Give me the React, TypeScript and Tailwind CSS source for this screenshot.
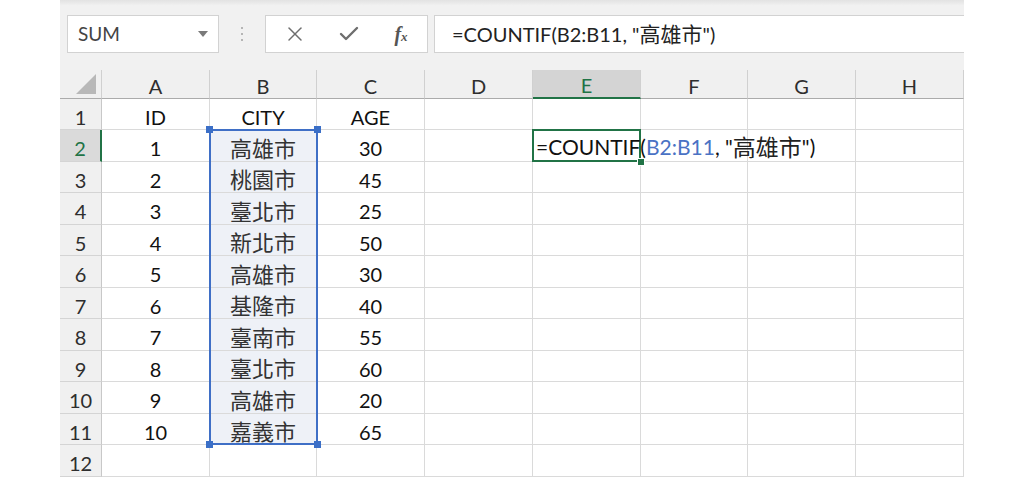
import React from "react";
import { X, Check } from "lucide-react";

const FONT = { fontFamily: '"Lato", "Noto Sans CJK TC", sans-serif' };

const cols = ["A", "B", "C", "D", "E", "F", "G", "H"];
const data: [string, string, string][] = [
  ["ID", "CITY", "AGE"],
  ["1", "高雄市", "30"],
  ["2", "桃園市", "45"],
  ["3", "臺北市", "25"],
  ["4", "新北市", "50"],
  ["5", "高雄市", "30"],
  ["6", "基隆市", "40"],
  ["7", "臺南市", "55"],
  ["8", "臺北市", "60"],
  ["9", "高雄市", "20"],
  ["10", "嘉義市", "65"],
  ["", "", ""],
];

function Handle({ className }: { className: string }) {
  return <div className={`absolute w-[7px] h-[7px] bg-[#3b6fc7] ${className}`} />;
}

export default function App() {
  const cells: React.ReactNode[] = [];
  cells.push(
    <div key="corner" className="relative bg-[#f0f0f0] border-r border-b border-r-[#d0d0d0] border-b-[#ababab]">
      <svg className="absolute right-[5px] bottom-[4px]" width="20" height="20" viewBox="0 0 20 20">
        <polygon points="20,0 20,20 0,20" fill="#b8b8b8" />
      </svg>
    </div>
  );
  cols.forEach((c) => {
    const sel = c === "E";
    cells.push(
      <div
        key={"h" + c}
        className={`flex items-center justify-center pt-[3px] text-[20px] border-r border-r-[#d0d0d0] ${
          sel
            ? "bg-[#d4d4d4] text-[#217346] border-b-2 border-b-[#217346]"
            : "bg-[#f0f0f0] text-[#2e2e2e] border-b border-b-[#ababab]"
        }`}
      >
        {c}
      </div>
    );
  });
  data.forEach((row, i) => {
    const r = i + 1;
    const selRow = r === 2;
    cells.push(
      <div
        key={"r" + r}
        className={`flex items-center justify-center pt-[5px] text-[20px] border-b border-b-[#d4d4d4] ${
          selRow
            ? "bg-[#dadada] text-[#217346] border-r-2 border-r-[#217346]"
            : "bg-[#f0f0f0] text-[#2e2e2e] border-r border-r-[#c8c8c8]"
        }`}
      >
        {r}
      </div>
    );
    cols.forEach((c, ci) => {
      const base = "relative flex items-center justify-center pt-[5px] border-r border-b border-[#dadada] text-[#111]";
      let content: React.ReactNode = null;
      let extra = "";
      if (ci === 0) content = <span className="text-[20px]">{row[0]}</span>;
      if (ci === 1) {
        const cjk = r >= 2;
        content = (
          <span className={cjk ? "text-[22px] text-[#333]" : "text-[20px]"}>{row[1]}</span>
        );
        if (r >= 2 && r <= 11) extra = " bg-[#eef1f7]";
      }
      if (ci === 2) content = <span className="text-[20px]">{row[2]}</span>;
      cells.push(
        <div key={`c${r}${c}`} className={base + extra + (c === "E" && r === 2 ? " z-10" : "")}>
          {content}
          {c === "B" && r === 2 && (
            <div className="absolute left-[-1px] top-[-1px] w-[109px] h-[316px] border-2 border-[#3f6fc6] z-20 pointer-events-none">
              <Handle className="left-[-5px] top-[-5px]" />
              <Handle className="right-[-5px] top-[-5px]" />
              <Handle className="left-[-5px] bottom-[-5px]" />
              <Handle className="right-[-5px] bottom-[-5px]" />
            </div>
          )}
          {c === "E" && r === 2 && (
            <>
              <div className="absolute left-[-1px] top-[-1px] right-[-1px] bottom-[-1px] border-2 border-[#217346] pointer-events-none" />
              <div className="absolute right-[-5px] bottom-[-5px] w-[8px] h-[8px] bg-[#217346] border border-white" />
              <span className="absolute left-[3px] top-[3px] bottom-0 flex items-center whitespace-nowrap text-[21px] text-[#111]">
                =COUNTIF(<span className="text-[#4a72c4]">B2:B11</span>, "<span className="text-[23px] text-[#222]">高雄市</span>")
              </span>
            </>
          )}
        </div>
      );
    });
  });

  return (
    <div className="w-[1024px] h-[477px] bg-white overflow-hidden pl-[60px]" style={FONT}>
      <div className="w-[904px] h-[477px] flex flex-col bg-[#f1f1f1]">
        <div className="h-[70px] bg-gradient-to-b from-[#e2e2e2] via-[#f1f1f1] via-[8%] to-[#f1f1f1] flex items-start pt-[15px] pl-[7px]">
          <div className="w-[152px] h-[38px] bg-white border border-[#d2d2d2] flex items-center justify-between pl-[10px] pr-[10px]">
            <span className="text-[19px] text-[#444]">SUM</span>
            <svg width="10" height="6" viewBox="0 0 10 6">
              <polygon points="0,0 10,0 5,6" fill="#7a7a7a" />
            </svg>
          </div>
          <div className="w-[46px] h-[38px] flex flex-col items-center justify-center gap-[4px]">
            <div className="w-[2px] h-[2px] bg-[#b5b5b5]" />
            <div className="w-[2px] h-[2px] bg-[#b5b5b5]" />
            <div className="w-[2px] h-[2px] bg-[#b5b5b5]" />
          </div>
          <div className="w-[163px] h-[38px] bg-white border border-[#d2d2d2] flex items-center">
            <div className="w-[56px] flex justify-center pl-[1px]">
              <X size={24} strokeWidth={1.5} color="#6e6e6e" />
            </div>
            <div className="w-[54px] flex justify-center">
              <Check size={24} strokeWidth={2.4} color="#6e6e6e" />
            </div>
            <div className="w-[50px] flex justify-center">
              <span className="italic text-[#555] text-[20px] font-semibold" style={{ fontFamily: '"Liberation Serif", serif' }}>
                f<span className="text-[13px]">x</span>
              </span>
            </div>
          </div>
          <div className="ml-[6px] flex-1 h-[38px] bg-white border border-[#d2d2d2] border-r-0 flex items-center pl-[17px]">
            <span className="text-[20px] text-[#222] whitespace-nowrap">
              =COUNTIF(B2:B11, "<span className="text-[21px]">高雄市</span>")
            </span>
          </div>
        </div>
        <div className="flex-1 bg-white grid grid-cols-[42px_108px_107px_108px_108px_108px_107px_108px_108px] grid-rows-[29px_repeat(6,31px_32px)]">
          {cells}
        </div>
      </div>
    </div>
  );
}
